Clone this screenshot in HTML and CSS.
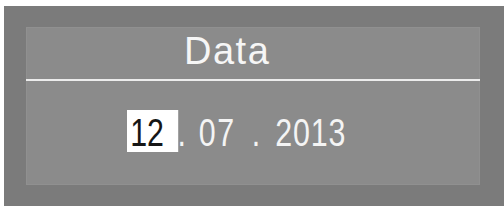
FILE: index.html
```html
<!DOCTYPE html>
<html>
<head>
    <link rel="stylesheet" href="styles.css">
</head>
<body>
    <div class="screen">
        <div class="panel">
            <div class="panel-title">Data</div>
            <div class="panel-rule"></div>
            <div class="date-row">
                <span class="field selected">12</span>
                <span class="sep">.</span>
                <span class="field month">07</span>
                <span class="sep sep-2">.</span>
                <span class="field year">2013</span>
            </div>
        </div>
    </div>
</body>
</html>
```

FILE: styles.css
```css
body {
    margin: 0;
    background-color: #ffffff;
    font-family: 'Liberation Sans', Arial, sans-serif;
    overflow: hidden;
}

.screen {
    margin: 6px 0 0 4px;
    height: 200px;
    background-color: #7b7b7b;
    padding-top: 21px;
    box-sizing: border-box;
}

.panel {
    margin-left: 22px;
    width: 454px;
    height: 158px;
    background-color: #8b8b8b;
    box-shadow: inset 0 0 0 1px #909090;
    padding-top: 5px;
    box-sizing: border-box;
}

.panel-title {
    padding-left: 158px;
    font-size: 38px;
    line-height: 38px;
    height: 38px;
    color: #f6f6f6;
    letter-spacing: 1.5px;
}

.panel-rule {
    margin-top: 9px;
    height: 2px;
    background-color: #ececec;
}

.date-row {
    display: flex;
    align-items: flex-start;
    margin-top: 29px;
    margin-left: 101px;
    font-size: 38px;
    color: #f4f4f4;
    transform: scaleX(0.8);
    transform-origin: left top;
}

.field,
.sep {
    line-height: 38px;
    padding-top: 4px;
}

.selected {
    width: 60px;
    padding-left: 4px;
    background-color: #ffffff;
    color: #161616;
}

.sep {
    margin-left: -1px;
}

.month {
    margin-left: 16px;
    letter-spacing: 2px;
}

.sep-2 {
    margin-left: 20px;
}

.year {
    margin-left: 19px;
    letter-spacing: 1px;
}
```
